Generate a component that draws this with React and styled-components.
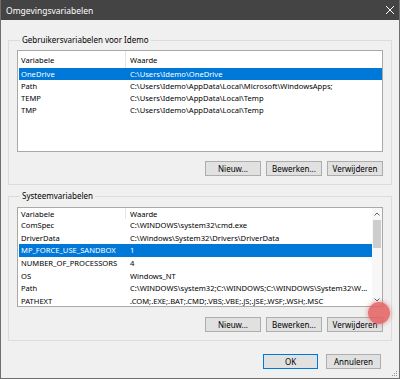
import React from "react";
import styled, { createGlobalStyle } from "styled-components";

const Global = createGlobalStyle`
  html, body { margin: 0; padding: 0; background: #f0f0f0; }
  * { box-sizing: border-box; }
`;

const Window = styled.div`
  position: relative;
  width: 400px;
  height: 379px;
  background: #f0f0f0;
  border: 1px solid #6e6e6e;
  border-top: 0;
  display: flex;
  flex-direction: column;
  font-family: "Noto Sans", "Open Sans", sans-serif;
  font-size: 8px;
  color: #000;
  overflow: hidden;
`;

const TitleBar = styled.div`
  height: 20px;
  margin: 0 -1px;
  background: #444444;
  color: #ffffff;
  display: flex;
  align-items: center;
  justify-content: space-between;
  padding: 0 5px 0 6px;
  font-size: 8.5px;
  flex-shrink: 0;
`;

const Body = styled.div`
  padding: 0 7px;
  display: flex;
  flex-direction: column;
`;

const Group = styled.fieldset`
  margin: ${(p) => p.$mt}px 0 0 0;
  padding: ${(p) => p.$pt}px 8px 8px 8px;
  border: 1px solid #dcdcdc;
  min-width: 0;
`;

const Legend = styled.legend`
  padding: 0 2px;
  margin-left: 3px;
  line-height: 12px;
  font-size: 8px;
  color: #000;
`;

const List = styled.div`
  height: ${(p) => p.$h}px;
  border: 1px solid #a9a9a9;
  background: #ffffff;
  display: flex;
  overflow: hidden;
  font-size: 7.6px;
`;

const ListBody = styled.div`
  flex: 1;
  padding-left: 1px;
  overflow: hidden;
  min-width: 0;
`;

const Header = styled.div`
  display: grid;
  grid-template-columns: 107px 245px;
  height: ${(p) => p.$h}px;
`;

const HeaderCell = styled.div`
  display: flex;
  align-items: ${(p) => (p.$bottom ? "flex-end" : "center")};
  padding-left: ${(p) => (p.$first ? 2 : 4)}px;
  border-right: ${(p) => (p.$first ? "1px solid #e5e5e5" : "0")};
  white-space: nowrap;
  line-height: 10px;
`;

const Row = styled.div`
  display: grid;
  grid-template-columns: 107px 245px;
  height: ${(p) => p.$h}px;
  align-items: center;
  background: ${(p) => (p.$sel ? "#0078d7" : "transparent")};
  color: ${(p) => (p.$sel ? "#ffffff" : "#000000")};
`;

const Cell = styled.div`
  padding-left: ${(p) => (p.$first ? 2 : 4)}px;
  padding-right: 2px;
  white-space: nowrap;
  overflow: hidden;
  text-overflow: ellipsis;
  line-height: 10px;
`;

const ScrollBar = styled.div`
  width: 10px;
  background: #f7f7f7;
  display: flex;
  flex-direction: column;
  flex-shrink: 0;
`;

const ScrollArrow = styled.div`
  height: 12px;
  display: flex;
  align-items: center;
  justify-content: center;
`;

const ScrollTrack = styled.div`
  flex: 1;
  display: flex;
  flex-direction: column;
  padding: 0 1px;
`;

const Thumb = styled.div`
  height: 28px;
  background: #cdcdcd;
`;

const ButtonRow = styled.div`
  display: flex;
  justify-content: flex-end;
  gap: 5px;
  margin-top: ${(p) => p.$mt}px;
`;

const Button = styled.button`
  width: ${(p) => p.$w || 56}px;
  height: 15px;
  padding: 0;
  margin: 0;
  background: #e1e1e1;
  border: 1px solid ${(p) => (p.$primary ? "#0078d7" : "#adadad")};
  font-family: inherit;
  font-size: 8px;
  color: #000;
  line-height: 1;
`;

const Footer = styled.div`
  display: flex;
  justify-content: flex-end;
  gap: 8px;
  margin-top: 13px;
  padding-right: 11px;
`;

const ClickMark = styled.div`
  position: absolute;
  left: 367px;
  top: 302px;
  width: 22px;
  height: 22px;
  border-radius: 50%;
  background: rgba(228, 96, 96, 0.85);
  box-shadow: 0 0 4px 1px rgba(220, 90, 90, 0.45);
`;

const Grip = styled.svg`
  position: absolute;
  right: 1px;
  bottom: 1px;
`;

const Close = () => (
  <svg width="10" height="10" viewBox="0 0 10 10">
    <path d="M1 1 L9 9 M9 1 L1 9" stroke="#ffffff" strokeWidth="1" />
  </svg>
);

const Chevron = ({ up }) => (
  <svg width="6" height="4" viewBox="0 0 6 4">
    <path
      d={up ? "M0.5 3.5 L3 1 L5.5 3.5" : "M0.5 0.5 L3 3 L5.5 0.5"}
      stroke="#606060"
      strokeWidth="1"
      fill="none"
    />
  </svg>
);

const userVars = [
  ["OneDrive", "C:\\Users\\Idemo\\OneDrive", true],
  ["Path", "C:\\Users\\Idemo\\AppData\\Local\\Microsoft\\WindowsApps;"],
  ["TEMP", "C:\\Users\\Idemo\\AppData\\Local\\Temp"],
  ["TMP", "C:\\Users\\Idemo\\AppData\\Local\\Temp"],
];

const sysVars = [
  ["ComSpec", "C:\\WINDOWS\\system32\\cmd.exe"],
  ["DriverData", "C:\\Windows\\System32\\Drivers\\DriverData"],
  ["MP_FORCE_USE_SANDBOX", "1", true],
  ["NUMBER_OF_PROCESSORS", "4"],
  ["OS", "Windows_NT"],
  ["Path", "C:\\WINDOWS\\system32;C:\\WINDOWS;C:\\WINDOWS\\System32\\Wb..."],
  ["PATHEXT", ".COM;.EXE;.BAT;.CMD;.VBS;.VBE;.JS;.JSE;.WSF;.WSH;.MSC"],
];

const VarList = ({ rows, height, headerH, rowH, scroll }) => (
  <List $h={height}>
    <ListBody>
      <Header $h={headerH}>
        <HeaderCell $first $bottom={scroll}>Variabele</HeaderCell>
        <HeaderCell $bottom={scroll}>Waarde</HeaderCell>
      </Header>
      {rows.map(([k, v, sel]) => (
        <Row key={k} $h={rowH} $sel={sel}>
          <Cell $first>{k}</Cell>
          <Cell>{v}</Cell>
        </Row>
      ))}
    </ListBody>
    {scroll && (
      <ScrollBar>
        <ScrollArrow>
          <Chevron up />
        </ScrollArrow>
        <ScrollTrack>
          <Thumb />
        </ScrollTrack>
        <ScrollArrow>
          <Chevron />
        </ScrollArrow>
      </ScrollBar>
    )}
  </List>
);

export default function App() {
  return (
    <>
      <Global />
      <Window>
        <TitleBar>
          <span>Omgevingsvariabelen</span>
          <Close />
        </TitleBar>
        <Body>
          <Group $mt={14} $pt={4}>
            <Legend>Gebruikersvariabelen voor Idemo</Legend>
            <VarList rows={userVars} height={102} headerH={17} rowH={12} />
            <ButtonRow $mt={9}>
              <Button>Nieuw...</Button>
              <Button>Bewerken...</Button>
              <Button>Verwijderen</Button>
            </ButtonRow>
          </Group>
          <Group $mt={5} $pt={5}>
            <Legend>Systeemvariabelen</Legend>
            <VarList rows={sysVars} height={100} headerH={11} rowH={12.6} scroll />
            <ButtonRow $mt={10}>
              <Button>Nieuw...</Button>
              <Button>Bewerken...</Button>
              <Button>Verwijderen</Button>
            </ButtonRow>
          </Group>
          <Footer>
            <Button $w={55} $primary>OK</Button>
            <Button $w={55}>Annuleren</Button>
          </Footer>
        </Body>
        <ClickMark />
        <Grip width="8" height="8" viewBox="0 0 8 8">
          <rect x="6" y="2" width="1" height="1" fill="#9a9a9a" />
          <rect x="4" y="4" width="1" height="1" fill="#9a9a9a" />
          <rect x="6" y="4" width="1" height="1" fill="#9a9a9a" />
          <rect x="2" y="6" width="1" height="1" fill="#9a9a9a" />
          <rect x="4" y="6" width="1" height="1" fill="#9a9a9a" />
          <rect x="6" y="6" width="1" height="1" fill="#9a9a9a" />
        </Grip>
      </Window>
    </>
  );
}
